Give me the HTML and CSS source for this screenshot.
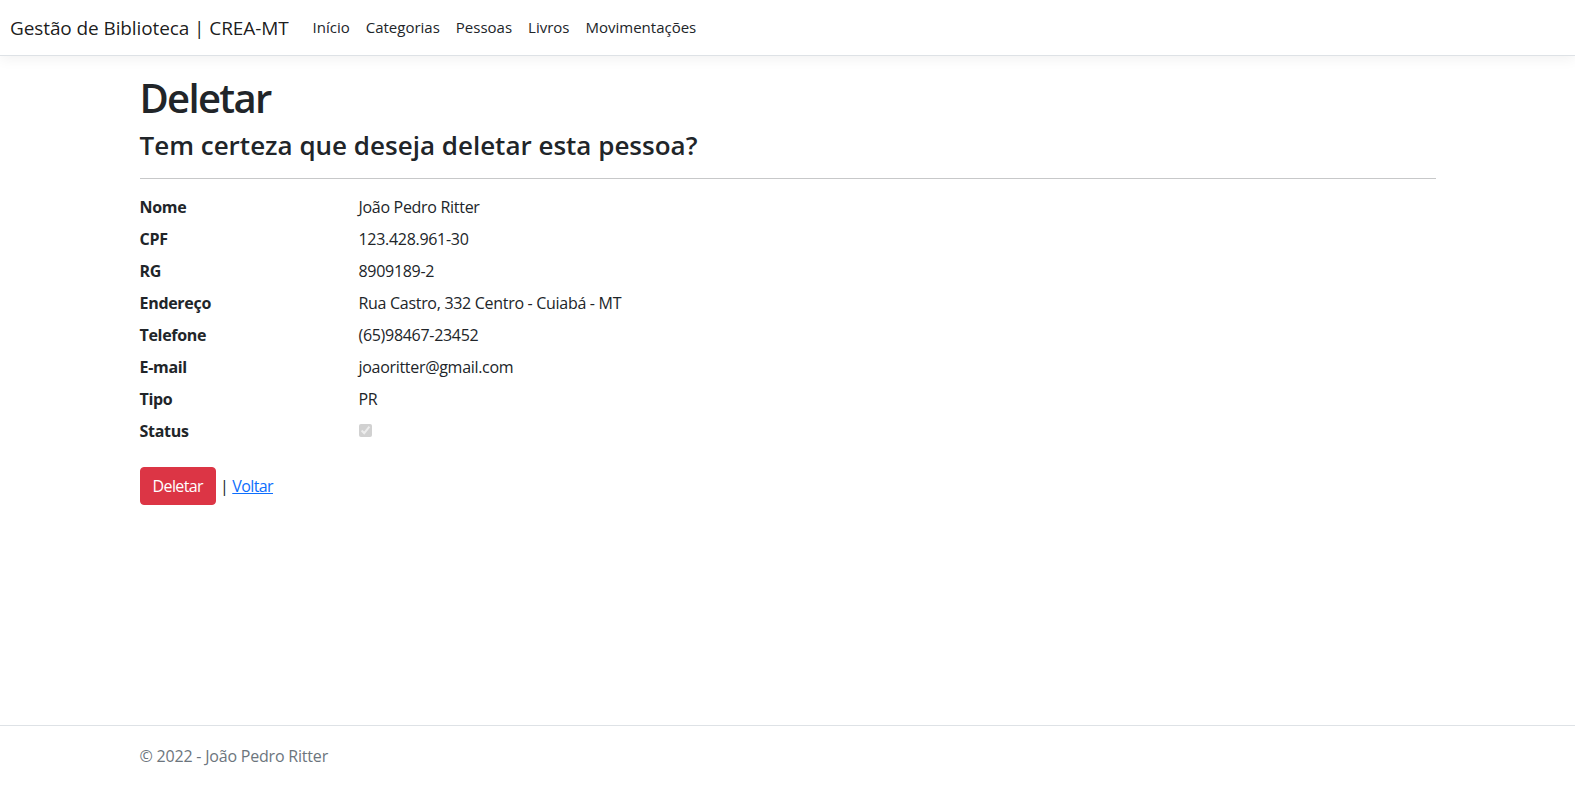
FILE: index.html
```html
<!DOCTYPE html>
<html lang="pt-br">
<head>
<meta charset="utf-8">
<title>Deletar - Gestão de Biblioteca</title>
<link rel="stylesheet" href="styles.css">
</head>
<body>
<header>
  <nav class="navbar">
    <div class="navbar-inner">
      <a class="brand" href="#">Gestão de Biblioteca | CREA-MT</a>
      <ul class="nav">
        <li><a class="nav-link" href="#">Início</a></li>
        <li><a class="nav-link" href="#">Categorias</a></li>
        <li><a class="nav-link" href="#">Pessoas</a></li>
        <li><a class="nav-link" href="#">Livros</a></li>
        <li><a class="nav-link" href="#">Movimentações</a></li>
      </ul>
    </div>
  </nav>
</header>
<div class="container">
  <main class="main">
    <h1 class="title">Deletar</h1>
    <h3 class="subtitle">Tem certeza que deseja deletar esta pessoa?</h3>
    <div>
      <hr class="divider">
      <dl class="details">
        <dt>Nome</dt><dd>João Pedro Ritter</dd>
        <dt>CPF</dt><dd>123.428.961-30</dd>
        <dt>RG</dt><dd>8909189-2</dd>
        <dt>Endereço</dt><dd>Rua Castro, 332 Centro - Cuiabá - MT</dd>
        <dt>Telefone</dt><dd>(65)98467-23452</dd>
        <dt>E-mail</dt><dd>joaoritter@gmail.com</dd>
        <dt>Tipo</dt><dd>PR</dd>
        <dt>Status</dt><dd><input class="check-box" type="checkbox" checked disabled></dd>
      </dl>
      <form class="actions">
        <input type="submit" value="Deletar" class="btn-danger"> | <a class="link" href="#">Voltar</a>
      </form>
    </div>
  </main>
</div>
<footer class="footer">
  <div class="container">© 2022 - João Pedro Ritter</div>
</footer>
</body>
</html>
```

FILE: styles.css
```css
html {
  position: relative;
  min-height: 100%;
  font-size: 16px;
}
*, *::before, *::after { box-sizing: border-box; }
body {
  margin: 0 0 60px 0;
  font-family: "Open Sans", "Noto Sans", "Liberation Sans", sans-serif;
  font-size: 16px;
  line-height: 1.5;
  letter-spacing: -0.3px;
  color: #212529;
  background: #fff;
}
.navbar {
  background: #fff;
  border-bottom: 1px solid #dee2e6;
  box-shadow: 0 4px 12px rgba(0,0,0,.05);
  margin-bottom: 16px;
  height: 56px;
  display: flex;
  align-items: center;
}
.navbar-inner {
  padding: 0 12px 0 10px;
  display: flex;
  align-items: center;
  width: 100%;
}
.brand {
  font-size: 19px;
  line-height: 30px;
  letter-spacing: -0.1px;
  color: rgba(0,0,0,.9);
  text-decoration: none;
  margin-right: 16px;
  white-space: nowrap;
}
.nav {
  list-style: none;
  margin: 0;
  padding: 0;
  display: flex;
}
.nav-link {
  display: block;
  padding: 8px 8px;
  color: #212529;
  text-decoration: none;
  font-size: 15px;
  letter-spacing: 0;
}
.container {
  width: 1320px;
  margin: 0 auto;
  padding: 0 12px;
}
.main { padding-bottom: 16px; }
.title {
  margin: 0 0 8px;
  padding-top: 2px;
  font-size: 40px;
  font-weight: 600;
  line-height: 1.2;
  letter-spacing: -1.7px;
}
.subtitle {
  margin: 0 0 8px;
  font-size: 26px;
  font-weight: 600;
  line-height: 1.2;
  letter-spacing: 0;
}
.divider {
  margin: 17px 0 16px;
  border: 0;
  border-top: 1px solid #212529;
  opacity: .25;
}
.details {
  display: grid;
  grid-template-columns: 219px 1fr;
  margin: 0 0 16px;
}
.details dt {
  font-weight: 700;
  margin: 0;
}
.details dd {
  margin: 0 0 8px;
}
.check-box {
  margin: 3px 0 0 0;
  width: 13px;
  height: 13px;
}
.actions { margin: 0; }
.btn-danger {
  font-family: inherit;
  font-size: 16px;
  line-height: 24px;
  letter-spacing: -0.6px;
  padding: 6px 12px;
  color: #fff;
  background: #dc3545;
  border: 1px solid #dc3545;
  border-radius: 4px;
  cursor: pointer;
}
.link {
  color: #0d6efd;
  text-decoration: underline;
  letter-spacing: -0.6px;
}
.footer {
  position: absolute;
  bottom: 0;
  width: 100%;
  white-space: nowrap;
  line-height: 60px;
  border-top: 1px solid #dee2e6;
  color: #6c757d;
  letter-spacing: -0.2px;
}
```
